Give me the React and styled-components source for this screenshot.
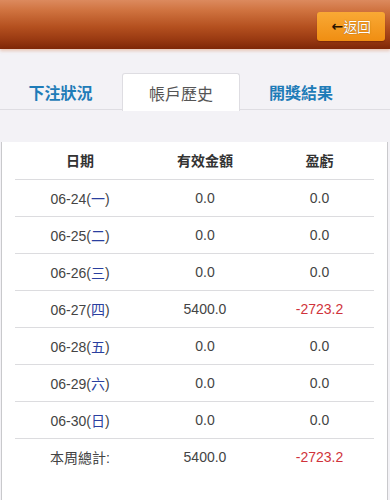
import React from 'react'
import styled, { createGlobalStyle } from 'styled-components'

const GlobalStyle = createGlobalStyle`
    html, body {
        margin: 0;
        padding: 0;
        background: #f3f2f6;
        font-family: "Liberation Sans", "Noto Sans CJK TC", sans-serif;
    }
    * {
        box-sizing: border-box;
    }
`

const rows = [
    { date: '06-24', day: '一', valid: '0.0', win: '0.0' },
    { date: '06-25', day: '二', valid: '0.0', win: '0.0' },
    { date: '06-26', day: '三', valid: '0.0', win: '0.0' },
    { date: '06-27', day: '四', valid: '5400.0', win: '-2723.2' },
    { date: '06-28', day: '五', valid: '0.0', win: '0.0' },
    { date: '06-29', day: '六', valid: '0.0', win: '0.0' },
    { date: '06-30', day: '日', valid: '0.0', win: '0.0' },
]

const tabs = [
    { label: '下注狀況', width: 121, active: false },
    { label: '帳戶歷史', width: 118, active: true },
    { label: '開獎結果', width: 120, active: false },
]

const App = () => (
    <Page>
        <GlobalStyle />
        <Header>
            <BackButton>
                <Arrow>←</Arrow>返回
            </BackButton>
        </Header>
        <Tabs>
            {tabs.map(tab => (
                <Tab key={tab.label} $w={tab.width} $active={tab.active}>
                    {tab.label}
                </Tab>
            ))}
        </Tabs>
        <Card>
            <Table>
                <thead>
                    <tr>
                        <Th $w={130}>日期</Th>
                        <Th $w={120}>有效金額</Th>
                        <Th>盈虧</Th>
                    </tr>
                </thead>
                <tbody>
                    {rows.map(row => (
                        <tr key={row.date}>
                            <Td>
                                {row.date}(<Day>{row.day}</Day>)
                            </Td>
                            <Td>{row.valid}</Td>
                            <Td $negative={row.win.startsWith('-')}>{row.win}</Td>
                        </tr>
                    ))}
                    <tr>
                        <Td $last>本周總計:</Td>
                        <Td $last>5400.0</Td>
                        <Td $last $negative>
                            -2723.2
                        </Td>
                    </tr>
                </tbody>
            </Table>
        </Card>
    </Page>
)

const Page = styled.div`
    width: 390px;
    height: 500px;
    overflow: hidden;
    display: flex;
    flex-direction: column;
`

const Header = styled.div`
    height: 49px;
    flex-shrink: 0;
    display: flex;
    align-items: center;
    justify-content: flex-end;
    padding-right: 5px;
    background: linear-gradient(
        to bottom,
        #dc8a5e 0%,
        #cf723f 22%,
        #b4501f 55%,
        #9a3a12 80%,
        #7e2707 100%
    );
    box-shadow: 0 2px 3px rgba(214, 120, 70, 0.35);
    position: relative;
    z-index: 1;
`

const BackButton = styled.div`
    width: 68px;
    height: 29px;
    margin-top: 3px;
    border-radius: 3px;
    background: linear-gradient(to bottom, #f9a935, #f08e12);
    box-shadow: 0 1px 1px rgba(80, 20, 0, 0.35);
    display: flex;
    align-items: center;
    justify-content: center;
    color: #fff;
    font-size: 14px;
    text-shadow: 0 0 1px #7a3b00;
    letter-spacing: -0.5px;
`

const Arrow = styled.span`
    color: #2a1300;
    font-weight: bold;
    text-shadow: none;
    font-family: "DejaVu Sans", sans-serif;
    font-size: 14px;
    margin-right: 1px;
`

const Tabs = styled.div`
    display: flex;
    margin-top: 24px;
    height: 37px;
    border-bottom: 1px solid #dedde2;
    flex-shrink: 0;
`

const Tab = styled.div`
    width: ${({ $w }) => $w}px;
    margin-left: ${({ $active }) => ($active ? '1px' : '0')};
    margin-right: ${({ $active }) => ($active ? '1px' : '0')};
    display: flex;
    align-items: center;
    justify-content: center;
    font-size: 16px;
    font-weight: ${({ $active }) => ($active ? 'normal' : 'bold')};
    color: ${({ $active }) => ($active ? '#555' : '#1f7cb8')};
    background: ${({ $active }) => ($active ? '#fff' : 'transparent')};
    border: 1px solid ${({ $active }) => ($active ? '#dedde2' : 'transparent')};
    border-bottom: none;
    border-radius: 3px 3px 0 0;
    height: ${({ $active }) => ($active ? '38px' : '37px')};
`

const Card = styled.div`
    flex: 1;
    margin: 32px 2px 0 1px;
    background: #fff;
    border-left: 1px solid #c9c9cc;
    border-right: 1px solid #c9c9cc;
    padding: 0 13px;
`

const Table = styled.table`
    width: 100%;
    border-collapse: collapse;
    table-layout: fixed;
`

const Th = styled.th`
    width: ${({ $w }) => ($w ? `${$w}px` : 'auto')};
    height: 37px;
    font-size: 14px;
    font-weight: bold;
    color: #333;
    text-align: center;
    border-bottom: 1px solid #dcdcdf;
    padding: 0;
`

const Td = styled.td`
    height: 37px;
    font-size: 14px;
    color: ${({ $negative }) => ($negative ? '#d0333b' : '#444')};
    text-align: center;
    border-bottom: ${({ $last }) => ($last ? 'none' : '1px solid #dcdcdf')};
    padding: 0;
`

const Day = styled.span`
    color: #2a3f9f;
`

export default App
